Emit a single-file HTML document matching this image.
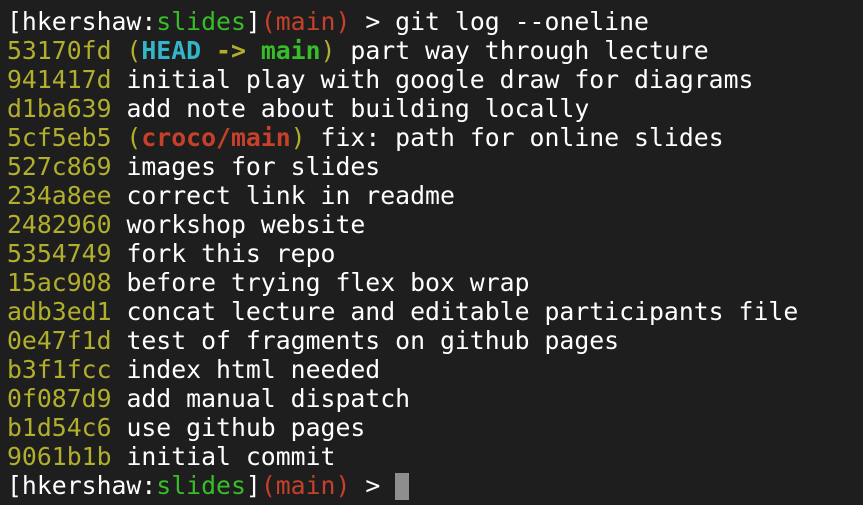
<!DOCTYPE html>
<html><head><meta charset="utf-8"><style>
html,body{margin:0;padding:0;width:863px;height:505px;overflow:hidden;background:#1e1e1e;}
pre{margin:0;position:absolute;left:7px;top:7px;font-family:"DejaVu Sans Mono","Liberation Mono",monospace;font-size:24.8px;line-height:29px;color:#ffffff;letter-spacing:0;}
.y{color:#b2af2c}.g{color:#38bd2a;}.r{color:#c7402a}.c{color:#33b6c9}
b{font-weight:bold}
.cur{display:inline-block;width:14px;height:27px;background:#8e8e8e;vertical-align:-6px;}
</style></head><body>
<pre>[hkershaw:<span class="g">slides</span>]<span class="r">(main)</span> &gt; git log --oneline
<span class="y">53170fd (<b class="c">HEAD</b> <b>-&gt;</b> <b class="g">main</b>)</span> part way through lecture
<span class="y">941417d</span> initial play with google draw for diagrams
<span class="y">d1ba639</span> add note about building locally
<span class="y">5cf5eb5 (<b class="r">croco/main</b>)</span> fix: path for online slides
<span class="y">527c869</span> images for slides
<span class="y">234a8ee</span> correct link in readme
<span class="y">2482960</span> workshop website
<span class="y">5354749</span> fork this repo
<span class="y">15ac908</span> before trying flex box wrap
<span class="y">adb3ed1</span> concat lecture and editable participants file
<span class="y">0e47f1d</span> test of fragments on github pages
<span class="y">b3f1fcc</span> index html needed
<span class="y">0f087d9</span> add manual dispatch
<span class="y">b1d54c6</span> use github pages
<span class="y">9061b1b</span> initial commit
[hkershaw:<span class="g">slides</span>]<span class="r">(main)</span> &gt; <span class="cur"></span></pre>
</body></html>
